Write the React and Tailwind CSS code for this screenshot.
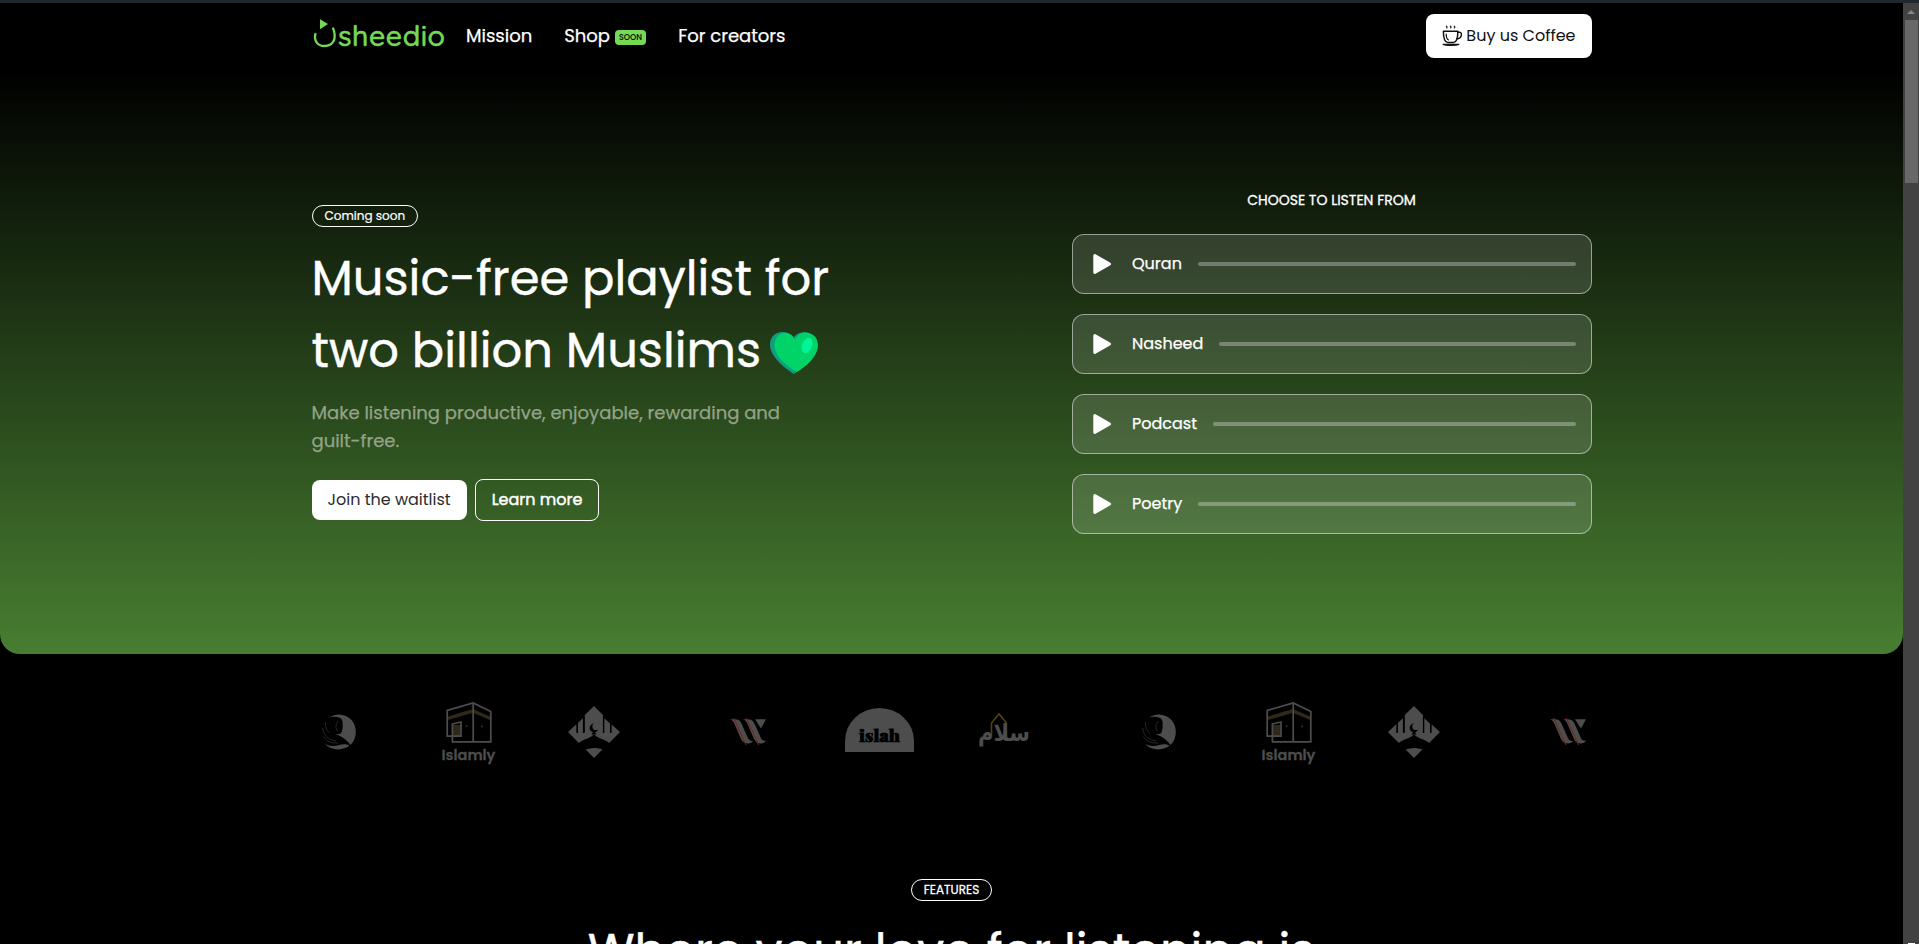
const CARDS = ["Quran", "Nasheed", "Podcast", "Poetry"];

function Logo() {
  return (
    <svg width="132" height="34" viewBox="0 0 132 34" className="shrink-0 overflow-visible">
      <path d="M8 0.2 L16 5 L8 10.2 Z" fill="#74d954" />
      <path
        d="M3.6 14.2 C1.4 21.5 5.5 27 12.5 27 C21 27 25.4 20 20.9 8.6"
        fill="none"
        stroke="#74d954"
        strokeWidth="2.3"
      />
      <text
        x="26"
        y="27.4"
        textLength="107"
        lengthAdjust="spacing"
        fill="#74d954"
        stroke="#74d954"
        strokeWidth="0.6"
        className="font-['Quicksand','Urbanist','Lato',sans-serif] text-[28.5px] font-medium"
      >
        sheedio
      </text>
    </svg>
  );
}

function CoffeeIcon() {
  return (
    <svg width="22" height="22" viewBox="1.2 0 22 22" fill="none" stroke="#111" strokeLinecap="round" className="shrink-0">
      <path d="M5.6 1.2 q1.2 .9 .2 1.8 M9.6 1.2 q1.2 .9 .2 1.8 M13.4 1.2 q1.2 .9 .2 1.8" strokeWidth="1.1" />
      <path d="M2.6 6.2 H17 C17 11 16.8 17.4 12.8 17.4 H7 C3 17.4 2.6 11 2.6 6.2 Z" strokeWidth="1.5" strokeLinejoin="round" />
      <path d="M17 7.2 H18.6 C20.9 7.2 20.8 9.2 20.4 10.8 C19.8 13 18 13.6 16.2 13.8" strokeWidth="1.4" />
      <path d="M5.4 9 C5.5 12 6 14.6 7.6 14.8" strokeWidth="1.2" />
      <path d="M1.9 19.4 C6 20.7 14 20.7 18.4 19.4 Z" fill="#111" strokeWidth="1.1" />
    </svg>
  );
}

function Heart() {
  return (
    <svg width="48" height="42" viewBox="0 0 48 42" className="shrink-0">
      <path d="M24 42 C16 37 0 25 0 12.5 C0 5 5.5 0 12 0 C17 0 20.5 1.5 23 6 C26 2 30 0 34.5 0 C40 0 44 4 45 10 C44 24 34 34 24 42 Z" fill="#0f9f80" />
      <path d="M27 40 C18 35 4.5 25 4.5 13 C4.5 6 9 1 14.5 1 C20 1 23.5 3.5 24.8 8 C26.8 3.5 31 .8 36 .8 C43 .8 48 6 48 13 C48 25 35 35 27 40 Z" fill="#00d468" />
      <ellipse cx="37" cy="13.5" rx="5" ry="7.8" transform="rotate(24 37 13.5)" fill="#00f59b" />
    </svg>
  );
}

function PlayCard({ label }) {
  return (
    <div className="flex h-[60px] items-center rounded-xl border border-white/50 bg-white/[0.13] px-[15px]">
      <svg width="24" height="24" viewBox="0 0 24 24" className="ml-[2px] shrink-0">
        <path d="M4.8 3.6 L19.6 12 L4.8 20.4 Z" fill="white" stroke="white" strokeWidth="3" strokeLinejoin="round" />
      </svg>
      <span className="ml-[18.5px] text-base text-white [-webkit-text-stroke:0.25px_white]">{label}</span>
      <div className="ml-4 h-1 flex-1 rounded-full bg-white/30" />
    </div>
  );
}

function Woman() {
  return (
    <svg width="34" height="36" viewBox="0 0 34 36" className="ml-[10px] shrink-0">
      <path d="M6 4.2 C13 -1.5 24 -.8 30 6.5 C36 14.5 34.5 25 28.6 31 C25 26 20 22.5 13.5 20 C17.5 20.4 19.4 19.8 19.8 17.4 C19.8 15.4 21.2 14.6 20.6 12.6 C20.6 9 21.4 5.6 17.6 3.8 C13.5 2.2 9 2.8 6 4.2 Z" fill="#4d4d4d" />
      <path d="M3 29.5 C8 33 13 32 17 31 C21 29.8 24.5 29.8 27.6 31.6 C21 37 9 37 3 29.5 Z" fill="#4d4d4d" />
      <path
        d="M.8 14 C.6 20 6 26.4 14 27 M1.6 22.5 C4 27 9 29.4 16 29 M3.6 8 C2.8 12 4.6 16.5 7.6 19 M16.6 7 C13.6 10 13.2 14 15.6 17.4"
        fill="none"
        stroke="#2b2b2b"
        strokeWidth="0.9"
      />
    </svg>
  );
}

function Islamly() {
  return (
    <div className="ml-[84px] flex w-[58px] shrink-0 flex-col items-center pt-[3px]">
      <svg width="46" height="42" viewBox="0 0 46 42" fill="none" className="shrink-0">
        <path d="M2 14.4 L27 7 L44 14.4 V18 L27 10.8 L2 18 Z" fill="#2e2a17" />
        <rect x="7" y="23" width="7.5" height="12" fill="#2e2a17" />
        <path d="M6.4 22 L15 20 V34.2 H1.2 V8.4 L27.2 1 L44.8 9.6 V39.8 H6.4 Z M27.2 1 V39.8" stroke="#4d4d4d" strokeWidth="1.7" />
        <circle cx="20.6" cy="24" r="1.1" fill="#2e2a17" />
        <circle cx="36" cy="24.4" r="1.1" fill="#2e2a17" />
      </svg>
      <span className="text-[14.5px] leading-[22px] font-semibold text-[#4d4d4d] [-webkit-text-stroke:0.3px_#4d4d4d]">Islamly</span>
    </div>
  );
}

function Mosque() {
  return (
    <svg width="52" height="52" viewBox="0 0 52 52" fill="#4d4d4d" className="ml-[70px] shrink-0">
      <path d="M26 0 L35 9 V26.5 H36 V12 L42 17.5 V26.5 H43.2 V18 L52 26 L41.2 37 C37 33 31 33 26 28.4 C21 33 15 33 10.8 37 L0 26 L8.6 18 V26.5 H9.8 V17 L15.2 12 V26.5 H16.8 V9 Z" />
      <path d="M17.6 43.4 C23 41.4 29 41.4 34.4 43.4 L26 52 Z" />
      <path d="M15.6 11 V27 M35.6 11 V27 M9.2 16 V27 M42.8 16 V27" stroke="black" strokeWidth="1.4" />
      <circle cx="26" cy="22" r="4.4" fill="black" />
      <circle cx="28" cy="20.4" r="3.6" />
      <path d="M26 25 L28.6 28.6 H23.4 Z" fill="black" />
    </svg>
  );
}

function DoubleStroke() {
  return (
    <svg width="36" height="28" viewBox="0 0 36 28" className="ml-[110px] shrink-0">
      <path d="M0 1.2 H5 C10 1.2 11 4 13 9 L17 18 C18.6 22 20 23 23 23 C21 26.5 13.5 26.5 11 21 L4.5 6 C3.5 3.5 2.5 2.2 0 1.2 Z" fill="#4d4d4d" />
      <path d="M13 1.2 H18 C22.5 1.2 24 4 26 9 L30 18 C31.5 22 32.5 23 36 22.6 C34.5 26.5 26.5 27 24 21 L17.5 6 C16.5 3.5 15.5 2.2 13 1.2 Z" fill="#4d4d4d" />
      <path d="M25 1.2 H36 L31 10.4 Z" fill="#4d4d4d" />
      <path d="M3.5 0 L16 27 M16.2 0 L28.6 27" stroke="#7a2416" strokeWidth="1" />
    </svg>
  );
}

function Islah() {
  return (
    <svg width="69" height="44" viewBox="0 0 69 44" className="mb-[4px] ml-[79px] shrink-0">
      <path d="M0 44 V33 A34.5 33 0 0 1 69 33 V44 Z" fill="#4d4d4d" />
      <text
        x="14"
        y="33.8"
        textLength="41"
        lengthAdjust="spacingAndGlyphs"
        fill="black"
        stroke="black"
        strokeWidth="0.7"
        className="font-['Playfair_Display','Liberation_Serif',serif] text-[17px] font-black"
      >
        islah
      </text>
    </svg>
  );
}

function Salam() {
  return (
    <svg width="50" height="40" viewBox="0 0 50 40" className="ml-[65px] shrink-0 overflow-visible">
      <path d="M12.5 24 V11 L20 2 L27.5 11" fill="none" stroke="#5a4206" strokeWidth="1.5" />
      <text
        x="25"
        y="29"
        textAnchor="middle"
        textLength="52"
        lengthAdjust="spacingAndGlyphs"
        fill="#4d4d4d"
        className="font-['DejaVu_Sans',sans-serif] text-[24px] font-bold"
      >
        سلام
      </text>
    </svg>
  );
}

export default function App() {
  return (
    <div className="flex h-[944px] flex-col overflow-hidden bg-black font-['Poppins','Inter',sans-serif] text-white">
      <div className="h-[3px] shrink-0 bg-[#20272e]" />
      <div className="flex min-h-0 flex-1">
        <div className="flex min-w-0 flex-1 flex-col overflow-hidden">
          <header className="flex h-[67px] shrink-0 justify-center">
            <nav className="flex w-[1280px] items-center pb-[1px]">
              <Logo />
              <a className="ml-[22.5px] text-lg [-webkit-text-stroke:0.25px_white]">Mission</a>
              <a className="ml-[32px] flex items-center text-lg [-webkit-text-stroke:0.25px_white]">
                Shop
                <span className="mt-[3px] ml-[5px] rounded bg-[#74d954] px-1 text-[8px] leading-[15px] font-medium text-black [-webkit-text-stroke:0px]">
                  SOON
                </span>
              </a>
              <a className="ml-[32px] text-lg [-webkit-text-stroke:0.25px_white]">For creators</a>
              <button className="ml-auto flex h-11 items-center rounded-lg bg-white px-4 text-base text-[#111]">
                <CoffeeIcon />
                <span className="ml-[2px]">Buy us Coffee</span>
              </button>
            </nav>
          </header>

          <section className="flex h-[584px] shrink-0 justify-center rounded-b-[20px] bg-linear-to-b/srgb from-black to-[#487e31]">
            <div className="flex w-[1280px] justify-between">
              <div className="flex w-[540px] flex-col items-start pt-[135px]">
                <span className="h-[22px] rounded-full border border-white px-3 text-xs leading-5 [-webkit-text-stroke:0.2px_white]">
                  Coming soon
                </span>
                <h1 className="mt-4 text-5xl leading-[72px] whitespace-nowrap [-webkit-text-stroke:0.4px_white]">
                  Music-free playlist for
                  <span className="flex items-center">
                    two billion Muslims
                    <span className="mt-[3px] ml-[8.5px]">
                      <Heart />
                    </span>
                  </span>
                </h1>
                <p className="mt-3 w-[500px] text-lg leading-7 text-[#93a489] [-webkit-text-stroke:0.25px_#93a489]">
                  Make listening productive, enjoyable, rewarding and guilt-free.
                </p>
                <div className="mt-[24px] flex items-center gap-2">
                  <button className="h-10 rounded-lg bg-white px-4 text-base text-[#2c2c2c]">Join the waitlist</button>
                  <button className="h-[42px] rounded-lg border border-white px-4 text-base [-webkit-text-stroke:0.45px_white]">
                    Learn more
                  </button>
                </div>
              </div>

              <div className="flex w-[520px] flex-col pt-[120px]">
                <p className="text-center text-sm leading-5 [-webkit-text-stroke:0.3px_white]">CHOOSE TO LISTEN FROM</p>
                <div className="mt-6 flex flex-col gap-5">
                  {CARDS.map((label) => (
                    <PlayCard key={label} label={label} />
                  ))}
                </div>
              </div>
            </div>
          </section>

          <section className="mt-[46px] flex h-16 shrink-0 justify-center">
            <div className="flex w-[1280px]">
              <div className="flex w-[820px] shrink-0 items-center">
                <Woman />
                <Islamly />
                <Mosque />
                <DoubleStroke />
                <Islah />
                <Salam />
              </div>
              <div className="flex w-[460px] shrink-0 items-center">
                <Woman />
                <Islamly />
                <Mosque />
                <DoubleStroke />
              </div>
            </div>
          </section>

          <section className="flex flex-col items-center pt-[115px]">
            <span className="h-[22px] rounded-full border border-white px-3 text-xs leading-5 [-webkit-text-stroke:0.3px_white]">FEATURES</span>
            <h2 className="mt-[15px] text-5xl leading-[72px] whitespace-nowrap [-webkit-text-stroke:0.4px_white]">
              Where your love for listening is
            </h2>
          </section>
        </div>

        <aside className="flex w-4 shrink-0 flex-col items-center justify-between bg-[#424242]">
          <div className="flex flex-col items-center">
            <svg width="8" height="4" viewBox="0 0 8 4" className="mt-[7px]">
              <path d="M0 4 L4 0 L8 4 Z" fill="#868686" />
            </svg>
            <div className="mt-[6px] h-[163px] w-[13px] bg-[#686868]" />
          </div>
          <div className="h-px w-[7px] bg-white" />
        </aside>
      </div>
    </div>
  );
}
